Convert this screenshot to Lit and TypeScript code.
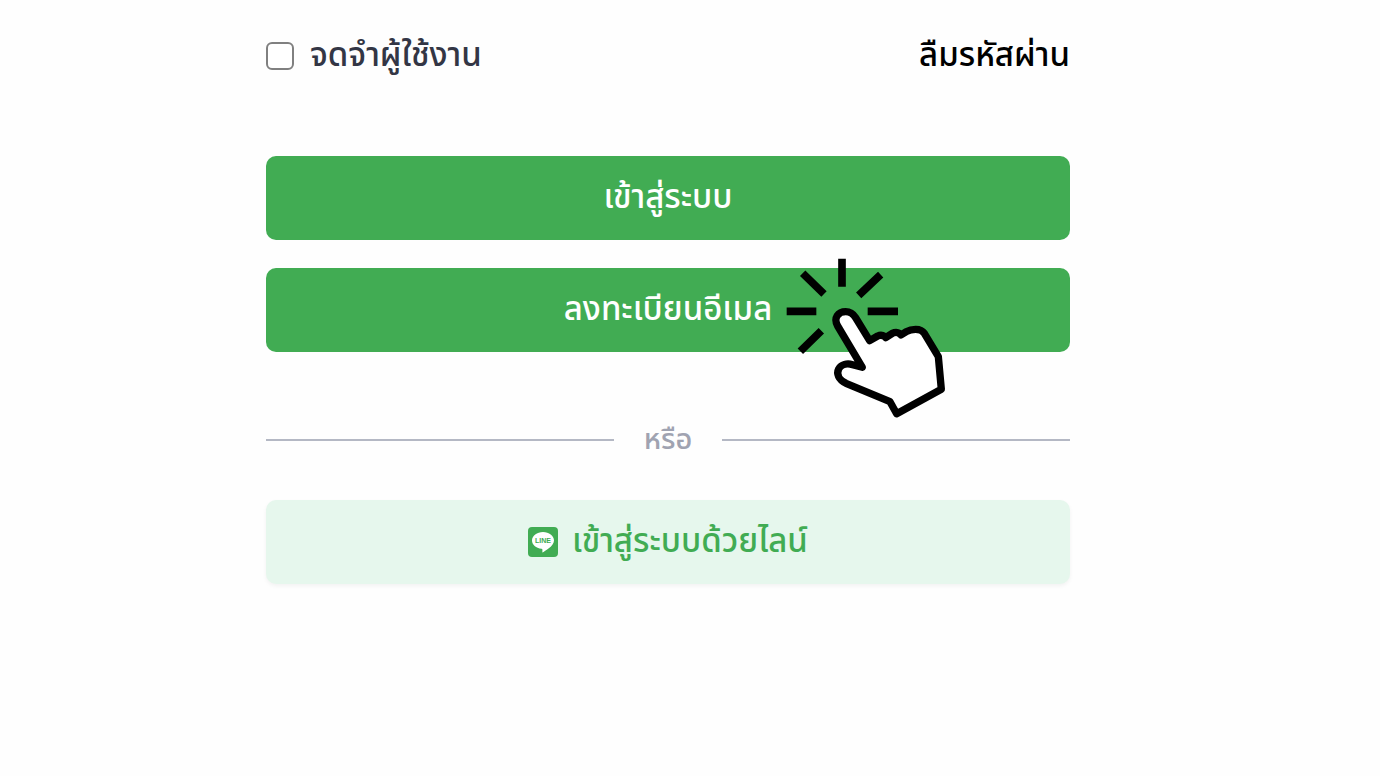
import { LitElement, html, css } from "lit";
import { customElement } from "lit/decorators.js";

@customElement("app-root")
export class AppRoot extends LitElement {
  static styles = css`
    :host {
      display: block;
      min-height: 100vh;
      box-sizing: border-box;
      padding: 32px 310px 32px 266px;
      background: #fefefe;
      color: #000;
      font-family: "Noto Sans Thai", "Noto Sans", sans-serif;
      font-size: 33px;
      font-weight: 500;
      line-height: 48px;
    }
    .options {
      display: flex;
      justify-content: space-between;
      align-items: center;
      margin-bottom: 76px;
    }
    .remember {
      display: flex;
      align-items: center;
      gap: 16px;
      color: #333645;
    }
    .check {
      appearance: none;
      box-sizing: border-box;
      width: 28px;
      height: 28px;
      margin: 0;
      border: 2px solid #808080;
      border-radius: 6px;
      background: #fff;
    }
    .check:checked {
      background: #41ac53;
    }
    .forgot {
      color: #000;
      text-decoration: none;
    }
    .actions {
      display: grid;
      gap: 28px;
    }
    .slot {
      position: relative;
    }
    .btn {
      display: flex;
      align-items: center;
      justify-content: center;
      gap: 14px;
      width: 100%;
      height: 84px;
      margin: 0;
      padding: 0;
      border: 0;
      border-radius: 10px;
      background: #41ac53;
      color: #fff;
      font: inherit;
      cursor: pointer;
    }
    .line {
      background: #e6f7ed;
      color: #41ac53;
      box-shadow: 0 2px 4px rgba(0, 0, 0, 0.05);
    }
    .pointer {
      position: absolute;
      left: calc(50% + 112px);
      top: -13px;
      width: 170px;
      height: 165px;
      pointer-events: none;
    }
    .divider {
      display: flex;
      align-items: center;
      gap: 30px;
      margin: 64px 0 36px;
      color: #a0a3b1;
      font-size: 29px;
    }
    .rule {
      flex: 1;
      height: 2px;
      margin: 0;
      border: 0;
      background: #b4b8c4;
    }
    .logo {
      width: 30px;
      height: 30px;
    }
    .logo-text {
      font: 700 7px "Liberation Sans", sans-serif;
    }
  `;

  render() {
    return html`
      <div class="options">
        <label class="remember" for="remember">
          <input class="check" id="remember" type="checkbox" />
          <span>จดจำผู้ใช้งาน</span>
        </label>
        <a class="forgot" href="#">ลืมรหัสผ่าน</a>
      </div>
      <div class="actions">
        <button class="btn" type="submit">เข้าสู่ระบบ</button>
        <div class="slot">
          <button class="btn" type="button">ลงทะเบียนอีเมล</button>
          <svg class="pointer" viewBox="30 15 510 495" aria-hidden="true">
            <path
              d="M216 26V110M98 70L162 132M332 74L266 136M50 184H139M293 184H384M154 242L91 304"
              fill="none" stroke="#000" stroke-width="23" />
            <path
              d="M277 352L203 228C189 204 205 185 227 185C242 185 250 192 257 203L299 272L323 258Q334 253 344 259L347 263L367 250Q379 244 388 250L393 255L409 245Q421 238 437 238Q455 238 463 250L505 320L514 418L380 491L360 455L228 400C205 388 199 371 206 357C214 343 231 339 248 344Z"
              fill="#fff" stroke="#000" stroke-width="22" stroke-linejoin="round" />
          </svg>
        </div>
      </div>
      <div class="divider"><hr class="rule" /><span>หรือ</span><hr class="rule" /></div>
      <button class="btn line" type="button">
        <svg class="logo" viewBox="0 0 30 30" aria-hidden="true">
          <rect width="30" height="30" rx="4" fill="#41ac53" />
          <path
            d="M15 5C9 5 4 8.800 4 13.400C4 17.600 8 21 13.500 21.700C14.700 22 14.500 23 14.300 25.500C17 24 26 19 26 13.400C26 8.800 21 5 15 5Z"
            fill="#fff" />
          <text class="logo-text" x="15" y="16" text-anchor="middle" fill="#41ac53">LINE</text>
        </svg>
        <span>เข้าสู่ระบบด้วยไลน์</span>
      </button>
    `;
  }
}
